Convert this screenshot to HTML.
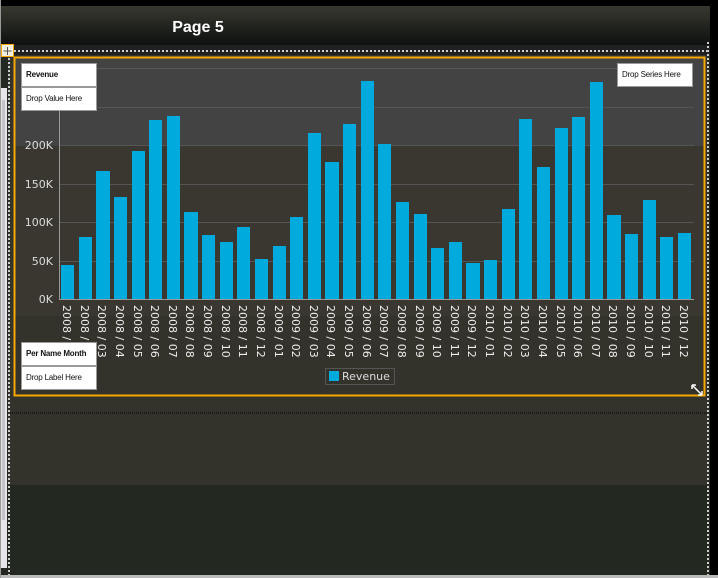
<!DOCTYPE html>
<html><head><meta charset="utf-8"><style>
body{margin:0;width:718px;height:578px;overflow:hidden;background:#232821;font-family:"Liberation Sans",sans-serif}
</style></head><body>
<svg width="718" height="578" xmlns="http://www.w3.org/2000/svg" style="position:absolute;left:0;top:0">
<defs>
<linearGradient id="tg" x1="0" y1="0" x2="0" y2="1">
<stop offset="0" stop-color="#383830"/><stop offset="0.5" stop-color="#22251f"/><stop offset="1" stop-color="#0d100f"/>
</linearGradient>
</defs>
<rect x="0" y="0" width="718" height="578" fill="#232821"/>
<rect x="0" y="0" width="718" height="6" fill="#000"/>
<rect x="0" y="6" width="710" height="39" fill="url(#tg)"/>
<rect x="0" y="45" width="710" height="10" fill="#202020"/>
<text x="198" y="32" font-size="16" font-weight="bold" fill="#fff" text-anchor="middle">Page 5</text>
<rect x="0" y="88" width="7" height="480" fill="#e6e6ea"/>
<rect x="2" y="100" width="3" height="420" fill="#c4c4c8"/>
<rect x="8" y="55" width="700" height="430" fill="#33322b"/>
<rect x="8" y="485" width="700" height="90" fill="#232821"/>
<rect x="710" y="0" width="8" height="578" fill="#000"/>
<rect x="0" y="575" width="718" height="3" fill="#bbb"/>
<rect x="0" y="0" width="1" height="578" fill="#999"/>
<line x1="14" y1="51" x2="708" y2="51" stroke="#ccc" stroke-width="2" stroke-dasharray="2,2"/>
<line x1="9" y1="58" x2="9" y2="575" stroke="#ccc" stroke-width="2" stroke-dasharray="2,2"/>
<line x1="708" y1="42" x2="708" y2="575" stroke="#ccc" stroke-width="2" stroke-dasharray="2,2"/>
<line x1="10" y1="413" x2="708" y2="413" stroke="#000" stroke-width="1" stroke-dasharray="1,1"/>
<rect x="1.5" y="44.5" width="12" height="12" fill="#f4f0e0" stroke="#f5a800"/>
<path d="M7.5 47v8M3.5 51h8" stroke="#555" stroke-width="1"/>
<rect x="15" y="58" width="689" height="88" fill="#434343"/>
<rect x="15" y="146" width="689" height="170" fill="#39372f"/>
<g stroke="#555" stroke-width="1">
<line x1="59" y1="68.5" x2="694" y2="68.5"/><line x1="59" y1="107.5" x2="694" y2="107.5"/>
<line x1="59" y1="145.5" x2="694" y2="145.5"/><line x1="59" y1="184.5" x2="694" y2="184.5"/>
<line x1="59" y1="222.5" x2="694" y2="222.5"/><line x1="59" y1="261.5" x2="694" y2="261.5"/>
</g>
<line x1="59.5" y1="110" x2="59.5" y2="300" stroke="#999"/>
<line x1="59" y1="299.5" x2="694" y2="299.5" stroke="#999"/>
<g fill="#ddd" font-size="11" text-anchor="end" font-family="DejaVu Sans, sans-serif">
<text x="53" y="149">200K</text><text x="53" y="188">150K</text><text x="53" y="226">100K</text><text x="53" y="265">50K</text><text x="53" y="303">0K</text>
</g>
<g fill="#00aadc">
<rect x="61" y="265" width="13" height="34"/><rect x="79" y="237" width="13" height="62"/><rect x="96" y="171" width="14" height="128"/><rect x="114" y="197" width="13" height="102"/><rect x="132" y="151" width="13" height="148"/><rect x="149" y="120" width="13" height="179"/><rect x="167" y="116" width="13" height="183"/><rect x="184" y="212" width="14" height="87"/><rect x="202" y="235" width="13" height="64"/><rect x="220" y="242" width="13" height="57"/><rect x="237" y="227" width="13" height="72"/><rect x="255" y="259" width="13" height="40"/><rect x="273" y="246" width="13" height="53"/><rect x="290" y="217" width="13" height="82"/><rect x="308" y="133" width="13" height="166"/><rect x="325" y="162" width="14" height="137"/><rect x="343" y="124" width="13" height="175"/><rect x="361" y="81" width="13" height="218"/><rect x="378" y="144" width="13" height="155"/><rect x="396" y="202" width="13" height="97"/><rect x="414" y="214" width="13" height="85"/><rect x="431" y="248" width="13" height="51"/><rect x="449" y="242" width="13" height="57"/><rect x="466" y="263" width="14" height="36"/><rect x="484" y="260" width="13" height="39"/><rect x="502" y="209" width="13" height="90"/><rect x="519" y="119" width="13" height="180"/><rect x="537" y="167" width="13" height="132"/><rect x="555" y="128" width="13" height="171"/><rect x="572" y="117" width="13" height="182"/><rect x="590" y="82" width="13" height="217"/><rect x="607" y="215" width="14" height="84"/><rect x="625" y="234" width="13" height="65"/><rect x="643" y="200" width="13" height="99"/><rect x="660" y="237" width="13" height="62"/><rect x="678" y="233" width="13" height="66"/>
</g>
<g fill="#eee" font-size="11" font-family="DejaVu Sans, sans-serif">
<text transform="translate(63,305) rotate(90)">2008 / 01</text><text transform="translate(81,305) rotate(90)">2008 / 02</text><text transform="translate(98,305) rotate(90)">2008 / 03</text><text transform="translate(116,305) rotate(90)">2008 / 04</text><text transform="translate(134,305) rotate(90)">2008 / 05</text><text transform="translate(151,305) rotate(90)">2008 / 06</text><text transform="translate(169,305) rotate(90)">2008 / 07</text><text transform="translate(186,305) rotate(90)">2008 / 08</text><text transform="translate(204,305) rotate(90)">2008 / 09</text><text transform="translate(222,305) rotate(90)">2008 / 10</text><text transform="translate(239,305) rotate(90)">2008 / 11</text><text transform="translate(257,305) rotate(90)">2008 / 12</text><text transform="translate(275,305) rotate(90)">2009 / 01</text><text transform="translate(292,305) rotate(90)">2009 / 02</text><text transform="translate(310,305) rotate(90)">2009 / 03</text><text transform="translate(327,305) rotate(90)">2009 / 04</text><text transform="translate(345,305) rotate(90)">2009 / 05</text><text transform="translate(363,305) rotate(90)">2009 / 06</text><text transform="translate(380,305) rotate(90)">2009 / 07</text><text transform="translate(398,305) rotate(90)">2009 / 08</text><text transform="translate(416,305) rotate(90)">2009 / 09</text><text transform="translate(433,305) rotate(90)">2009 / 10</text><text transform="translate(451,305) rotate(90)">2009 / 11</text><text transform="translate(468,305) rotate(90)">2009 / 12</text><text transform="translate(486,305) rotate(90)">2010 / 01</text><text transform="translate(504,305) rotate(90)">2010 / 02</text><text transform="translate(521,305) rotate(90)">2010 / 03</text><text transform="translate(539,305) rotate(90)">2010 / 04</text><text transform="translate(557,305) rotate(90)">2010 / 05</text><text transform="translate(574,305) rotate(90)">2010 / 06</text><text transform="translate(592,305) rotate(90)">2010 / 07</text><text transform="translate(609,305) rotate(90)">2010 / 08</text><text transform="translate(627,305) rotate(90)">2010 / 09</text><text transform="translate(645,305) rotate(90)">2010 / 10</text><text transform="translate(662,305) rotate(90)">2010 / 11</text><text transform="translate(680,305) rotate(90)">2010 / 12</text>
</g>
<rect x="325.5" y="368.5" width="69" height="16" fill="none" stroke="#555"/>
<rect x="329" y="371" width="10" height="10" fill="#00aadc"/>
<text x="342" y="380" font-size="11" fill="#ddd" font-family="DejaVu Sans, sans-serif">Revenue</text>
<g font-size="8" fill="#111" letter-spacing="-0.2">
<rect x="21.5" y="63.5" width="75" height="23" fill="#fff" stroke="#999"/>
<text x="26" y="77" font-weight="bold">Revenue</text>
<rect x="21.5" y="87.5" width="75" height="23" fill="#fff" stroke="#999"/>
<text x="26" y="101">Drop Value Here</text>
<rect x="617.5" y="63.5" width="75" height="23" fill="#fff" stroke="#999"/>
<text x="622" y="77">Drop Series Here</text>
<rect x="21.5" y="342.5" width="75" height="23" fill="#fff" stroke="#999"/>
<text x="26" y="356" font-weight="bold">Per Name Month</text>
<rect x="21.5" y="366.5" width="75" height="23" fill="#fff" stroke="#999"/>
<text x="26" y="380">Drop Label Here</text>
</g>
<rect x="14.5" y="57.5" width="690" height="338" fill="none" stroke="#f5a800" stroke-width="2"/>
<path d="M692 385l10 10M692 385v4M692 385h4M702 395v-4M702 395h-4" stroke="#fff" stroke-width="1.5" fill="none"/>
</svg>
</body></html>
